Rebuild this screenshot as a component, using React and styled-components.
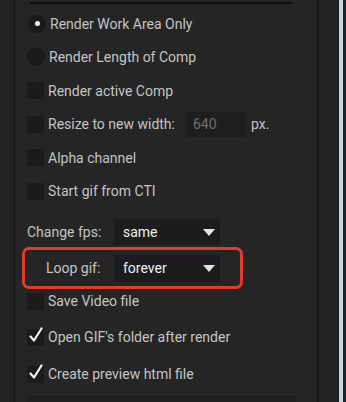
import React from "react";
import styled, { createGlobalStyle } from "styled-components";

const Global = createGlobalStyle`
  html, body { margin: 0; padding: 0; background: #222222; }
  body { font-family: Roboto, "Liberation Sans", sans-serif; }
`;

const Page = styled.div`
  display: flex;
  width: 346px;
  height: 402px;
  overflow: hidden;
  background: #222222;
`;

const Gutter = styled.div`
  flex: none;
  width: ${(p) => p.$w}px;
  background: #222222;
`;

const Panel = styled.div`
  flex: none;
  width: 305px;
  border-left: 1px solid #181818;
  border-right: 2px solid #181818;
  background: #252525;
  display: flex;
  flex-direction: column;
  padding: 0 0 0 12px;
  box-sizing: border-box;
`;

const Strip = styled.div`
  flex: none;
  width: 4px;
  border-left: 1px solid #1a1d20;
  background: #c8d5e5;
`;

const Rule = styled.div`
  margin: 2px 0 0 3px;
  width: 262px;
  height: 2px;
  background: #0e0e0e;
  flex: none;
`;

const Row = styled.div`
  flex: none;
  display: flex;
  align-items: center;
  height: ${(p) => p.$h || 33.5}px;
  margin-top: ${(p) => p.$mt || 0}px;
  padding-left: ${(p) => p.$pl || 0}px;
  gap: 4px;
`;

const Label = styled.span`
  color: #c4c4c4;
  font-size: 14px;
  white-space: nowrap;
  line-height: 1;
`;

const RadioDot = styled.span`
  flex: none;
  width: 18px;
  height: 18px;
  border-radius: 50%;
  background: #1a1a1a;
  display: flex;
  align-items: center;
  justify-content: center;
  &::after {
    content: "";
    width: 5px;
    height: 5px;
    border-radius: 50%;
    background: ${(p) => (p.$on ? "#f2f2f2" : "transparent")};
  }
`;

const Box = styled.span`
  flex: none;
  position: relative;
  width: 17px;
  height: 17px;
  background: #1b1b1b;
`;

const Check = styled.svg`
  position: absolute;
  left: 2px;
  top: -2px;
`;

const Input = styled.span`
  margin-left: 6px;
  width: 62px;
  height: 25px;
  background: #1e1e1e;
  color: #6e6e6e;
  font-size: 14px;
  display: flex;
  align-items: center;
  padding-left: 8px;
  box-sizing: border-box;
`;

const Select = styled.div`
  flex: none;
  width: 106px;
  height: ${(p) => p.$h}px;
  background: #1c1c1c;
  display: flex;
  align-items: center;
  justify-content: space-between;
  padding: 0 5px 0 9px;
  box-sizing: border-box;
  color: #f0f0f0;
  font-size: 14px;
`;

const Arrow = styled.span`
  width: 0;
  height: 0;
  border-left: 6px solid transparent;
  border-right: 6px solid transparent;
  border-top: 7px solid #e2e2e2;
`;

const FpsRow = styled.div`
  flex: none;
  display: flex;
  align-items: center;
  margin-top: 11px;
  height: 26px;
`;

const FieldLabel = styled(Label)`
  width: ${(p) => p.$w}px;
  padding-left: ${(p) => p.$pl || 0}px;
  box-sizing: border-box;
  flex: none;
`;

const Highlight = styled.div`
  flex: none;
  margin: 2px 0 0 -5px;
  width: 221px;
  height: 42px;
  border: 3px solid #e03b30;
  border-radius: 7px;
  box-sizing: border-box;
  display: flex;
  align-items: center;
`;

const Footer = styled.div`
  flex: none;
  margin-top: auto;
  width: 269px;
  height: 7px;
  background: #202020;
  border-top: 1px solid #2a2a2a;
`;

const CheckMark = () => (
  <Check width="14" height="16" viewBox="0 0 14 16">
    <path d="M1.5 9.5 L5 13.5 L12.5 1.5" fill="none" stroke="#f4f4f4" strokeWidth="2.2" strokeLinecap="round" strokeLinejoin="round" />
  </Check>
);

const CheckRow = ({ on, children, mt, h }) => (
  <Row $mt={mt} $h={h}>
    <Box>{on && <CheckMark />}</Box>
    {children}
  </Row>
);

export default function App() {
  return (
    <>
      <Global />
      <Page>
        <Gutter $w={14} />
        <Panel>
          <Rule />
          <Row $mt={3} $pl={1}>
            <RadioDot $on />
            <Label>Render Work Area Only</Label>
          </Row>
          <Row>
            <RadioDot />
            <Label>Render Length of Comp</Label>
          </Row>
          <CheckRow>
            <Label>Render active Comp</Label>
          </CheckRow>
          <CheckRow>
            <Label>Resize to new width:</Label>
            <Input>640</Input>
            <Label>px.</Label>
          </CheckRow>
          <CheckRow>
            <Label>Alpha channel</Label>
          </CheckRow>
          <CheckRow>
            <Label>Start gif from CTI</Label>
          </CheckRow>
          <FpsRow>
            <FieldLabel $w={87}>Change fps:</FieldLabel>
            <Select $h={26}>
              same
              <Arrow />
            </Select>
          </FpsRow>
          <Highlight>
            <FieldLabel $w={89} $pl={21}>Loop gif:</FieldLabel>
            <Select $h={27}>
              forever
              <Arrow />
            </Select>
          </Highlight>
          <CheckRow mt={0} h={24}>
            <Label>Save Video file</Label>
          </CheckRow>
          <CheckRow on mt={12} h={24}>
            <Label>Open GIF's folder after render</Label>
          </CheckRow>
          <CheckRow on mt={13} h={24}>
            <Label>Create preview html file</Label>
          </CheckRow>
          <Footer />
        </Panel>
        <Gutter $w={19} />
        <Strip />
      </Page>
    </>
  );
}
